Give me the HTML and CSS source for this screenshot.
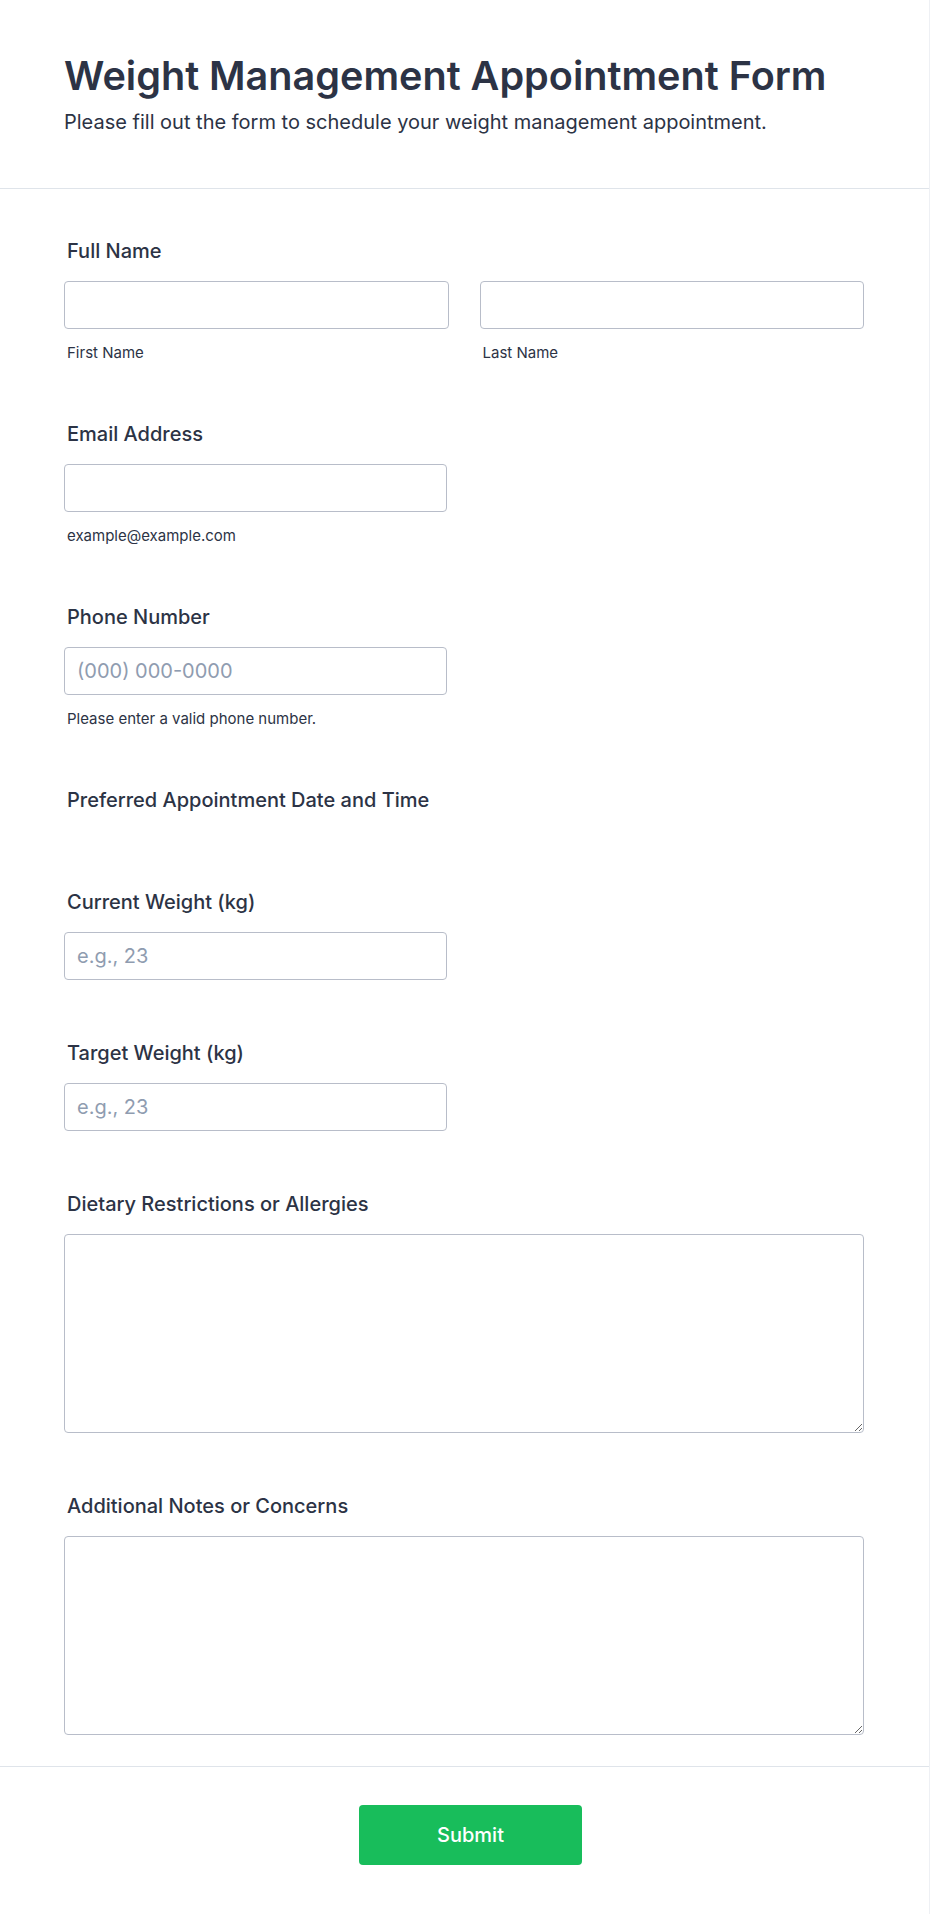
FILE: index.html
```html
<!DOCTYPE html>
<html lang="en">
<head>
<meta charset="utf-8">
<title>Weight Management Appointment Form</title>
<link rel="stylesheet" href="styles.css">
</head>
<body>
<div class="page">
  <header class="form-header">
    <h1 class="form-title">Weight Management Appointment Form</h1>
    <p class="form-subtitle">Please fill out the form to schedule your weight management appointment.</p>
  </header>
  <main class="form-body">
    <div class="field">
      <label class="label">Full Name</label>
      <div class="name-row">
        <div class="name-col">
          <input class="input" type="text">
          <span class="sublabel">First Name</span>
        </div>
        <div class="name-col">
          <input class="input" type="text">
          <span class="sublabel">Last Name</span>
        </div>
      </div>
    </div>
    <div class="field">
      <label class="label">Email Address</label>
      <input class="input half" type="email">
      <span class="sublabel">example@example.com</span>
    </div>
    <div class="field">
      <label class="label">Phone Number</label>
      <input class="input half" type="tel" placeholder="(000) 000-0000">
      <span class="sublabel">Please enter a valid phone number.</span>
    </div>
    <div class="field field-empty">
      <label class="label">Preferred Appointment Date and Time</label>
    </div>
    <div class="field">
      <label class="label">Current Weight (kg)</label>
      <input class="input half" type="text" placeholder="e.g., 23">
    </div>
    <div class="field">
      <label class="label">Target Weight (kg)</label>
      <input class="input half" type="text" placeholder="e.g., 23">
    </div>
    <div class="field">
      <label class="label">Dietary Restrictions or Allergies</label>
      <textarea class="textarea"></textarea>
    </div>
    <div class="field field-last">
      <label class="label">Additional Notes or Concerns</label>
      <textarea class="textarea"></textarea>
    </div>
  </main>
  <footer class="form-footer">
    <button class="submit" type="button">Submit</button>
  </footer>
</div>
</body>
</html>
```
FILE: styles.css
```css
* { box-sizing: border-box; }
html, body { margin: 0; padding: 0; background: #ffffff; }
body {
  font-family: Inter, "Noto Sans", "Liberation Sans", sans-serif;
  color: #2c3345;
}
.page {
  width: 930px;
  min-height: 1914px;
  border-right: 1px solid #eef0f4;
}
.form-header {
  padding: 52px 64px 54px 64px;
  border-bottom: 1px solid #dfe4ea;
}
.form-title {
  margin: 0;
  font-size: 39.6px;
  line-height: 48px;
  font-weight: 600;
  color: #2c3345;
}
.form-subtitle {
  margin: 10px 0 0 0;
  font-size: 20px;
  line-height: 24px;
  color: #2c3345;
}
.form-body {
  padding: 50px 65px 31px 64px;
  display: flex;
  flex-direction: column;
}
.field {
  display: flex;
  flex-direction: column;
  padding-bottom: 61px;
}
.field-empty { padding-bottom: 60px; }
.field-last { padding-bottom: 0; }
.label {
  font-size: 20px;
  line-height: 24px;
  font-weight: 500;
  padding-left: 3px;
  margin-bottom: 18px;
  color: #2c3345;
}
.name-row {
  display: grid;
  grid-template-columns: 1fr 1fr;
  column-gap: 31px;
}
.name-col { display: flex; flex-direction: column; }
.input {
  height: 48px;
  width: 100%;
  border: 1px solid #b8bdc9;
  border-radius: 4px;
  padding: 0 12px;
  font-family: inherit;
  font-size: 20px;
  color: #2c3345;
  background: #fff;
  outline: none;
}
.input.half { width: 383px; }
.input::placeholder { color: #8f9cb0; }
.sublabel {
  font-size: 15px;
  line-height: 17px;
  margin-top: 15px;
  padding-left: 3px;
  color: #2c3345;
}
.textarea {
  width: 100%;
  height: 199px;
  border: 1px solid #b8bdc9;
  border-radius: 4px;
  padding: 10px 12px;
  font-family: inherit;
  font-size: 20px;
  resize: vertical;
  outline: none;
  background: #fff;
}
.form-footer {
  border-top: 1px solid #dfe4ea;
  padding: 38px 0 40px 0;
  display: flex;
  justify-content: center;
}
.submit {
  width: 223px;
  height: 60px;
  margin-left: 12px;
  border: none;
  border-radius: 4px;
  background: #18bd5b;
  color: #ffffff;
  font-family: inherit;
  font-size: 20px;
  font-weight: 500;
  cursor: pointer;
}
```
